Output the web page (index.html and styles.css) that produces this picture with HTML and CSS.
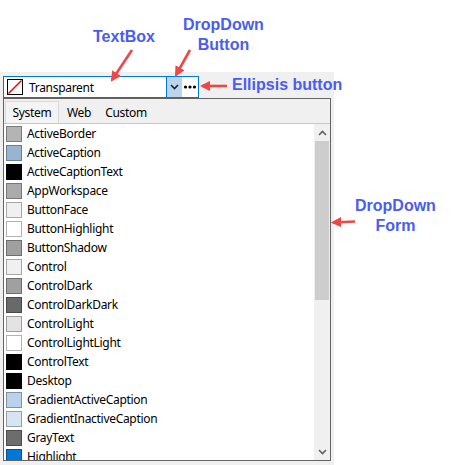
FILE: index.html
```html
<html lang="en">

<head>
  <meta charset="UTF-8">
  <meta name="viewport" content="width=device-width, initial-scale=1.0">
  <title>Color Picker</title>
  <link rel="stylesheet" href="styles.css">
</head>

<body>
  <div class="stage">
    <div class="panel">
      <div class="combo">
        <span class="swatch-none">
          <svg width="16" height="16" viewBox="0 0 16 16"><rect x="0.5" y="0.5" width="15" height="15" fill="#fff" stroke="#000"/><line x1="1.5" y1="14.5" x2="14.5" y2="1.5" stroke="#e00" stroke-width="1.5"/></svg>
        </span>
        <span class="combo-text">Transparent</span>
        <span class="drop-button">
          <svg width="9" height="6" viewBox="0 0 9 6"><path d="M1 1 L4.5 4.5 L8 1" fill="none" stroke="#222" stroke-width="1.6"/></svg>
        </span>
        <span class="ellipsis">
          <svg width="14" height="4" viewBox="0 0 14 4"><circle cx="2.5" cy="2" r="1.6" fill="#000"/><circle cx="7" cy="2" r="1.6" fill="#000"/><circle cx="11.5" cy="2" r="1.6" fill="#000"/></svg>
        </span>
      </div>

      <div class="dropdown">
        <div class="tabs">
          <span class="tab active">System</span>
          <span class="tab">Web</span>
          <span class="tab">Custom</span>
        </div>
        <div class="tab-page">
          <ul class="color-list">
            <li><span class="swatch" style="background:#b4b4b4"></span>ActiveBorder</li>
            <li><span class="swatch" style="background:#99b4d1"></span>ActiveCaption</li>
            <li><span class="swatch" style="background:#000000"></span>ActiveCaptionText</li>
            <li><span class="swatch" style="background:#ababab"></span>AppWorkspace</li>
            <li><span class="swatch" style="background:#f0f0f0"></span>ButtonFace</li>
            <li><span class="swatch" style="background:#ffffff"></span>ButtonHighlight</li>
            <li><span class="swatch" style="background:#a0a0a0"></span>ButtonShadow</li>
            <li><span class="swatch" style="background:#f0f0f0"></span>Control</li>
            <li><span class="swatch" style="background:#a0a0a0"></span>ControlDark</li>
            <li><span class="swatch" style="background:#696969"></span>ControlDarkDark</li>
            <li><span class="swatch" style="background:#e3e3e3"></span>ControlLight</li>
            <li><span class="swatch" style="background:#ffffff"></span>ControlLightLight</li>
            <li><span class="swatch" style="background:#000000"></span>ControlText</li>
            <li><span class="swatch" style="background:#000000"></span>Desktop</li>
            <li><span class="swatch" style="background:#b9d1ea"></span>GradientActiveCaption</li>
            <li><span class="swatch" style="background:#d7e4f2"></span>GradientInactiveCaption</li>
            <li><span class="swatch" style="background:#6d6d6d"></span>GrayText</li>
            <li class="last"><span class="swatch" style="background:#0078d7"></span>Highlight</li>
          </ul>
          <div class="scrollbar">
            <span class="scroll-arrow">
              <svg width="9" height="6" viewBox="0 0 9 6"><path d="M1 5 L4.5 1.5 L8 5" fill="none" stroke="#606060" stroke-width="1.6"/></svg>
            </span>
            <div class="scroll-track">
              <div class="scroll-thumb"></div>
            </div>
            <span class="scroll-arrow">
              <svg width="9" height="6" viewBox="0 0 9 6"><path d="M1 1 L4.5 4.5 L8 1" fill="none" stroke="#606060" stroke-width="1.6"/></svg>
            </span>
          </div>
        </div>
      </div>
    </div>

    <!-- callouts -->
    <div class="callout callout-textbox">TextBox</div>
    <div class="callout callout-button">DropDown<br>Button</div>
    <div class="callout callout-ellipsis">Ellipsis button</div>
    <div class="callout callout-form">DropDown<br>Form</div>

    <svg class="arrows" width="456" height="465" viewBox="0 0 456 465">
      <defs>
        <marker id="head" viewBox="0 0 10 10" refX="8" refY="5" markerWidth="4" markerHeight="4" orient="auto">
          <path d="M0 0 L10 5 L0 10 Z" fill="#f04646"/>
        </marker>
      </defs>
      <line x1="132" y1="50" x2="112" y2="80" stroke="#f04646" stroke-width="2.6" marker-end="url(#head)"/>
      <line x1="190" y1="50" x2="176" y2="75" stroke="#f04646" stroke-width="2.6" marker-end="url(#head)"/>
      <line x1="227" y1="86" x2="202" y2="86" stroke="#f04646" stroke-width="2.6" marker-end="url(#head)"/>
      <line x1="355" y1="221.5" x2="333" y2="222.5" stroke="#f04646" stroke-width="2.6" marker-end="url(#head)"/>
    </svg>
  </div>
</body>

</html>
```

FILE: styles.css
```css
body {
  margin: 0;
  background: #fff;
  font-family: "Noto Sans", "Open Sans", sans-serif;
  font-size: 12px;
  letter-spacing: -0.3px;
  color: #000;
}

.stage {
  position: relative;
  width: 456px;
  height: 465px;
  overflow: hidden;
}

.panel {
  margin-top: 72px;
  width: 334px;
  height: 393px;
  background: #f0f0f0;
  padding: 4px 0 0 3px;
  box-sizing: border-box;
}

.combo {
  display: flex;
  align-items: stretch;
  width: 196px;
  height: 22px;
  border: 1px solid #0078d7;
  box-sizing: border-box;
  background: #fff;
}

.swatch-none {
  display: flex;
  align-items: center;
  margin-left: 3px;
}

.combo-text {
  flex: 1;
  display: flex;
  align-items: center;
  padding-left: 6px;
}

.drop-button {
  width: 15px;
  display: flex;
  align-items: center;
  justify-content: center;
  background: #bcd5ee;
  border-left: 1px solid #0078d7;
}

.ellipsis {
  width: 16px;
  display: flex;
  align-items: center;
  justify-content: center;
}

.dropdown {
  width: 328px;
  height: 363px;
  border: 1px solid #646464;
  box-sizing: border-box;
  display: flex;
  flex-direction: column;
}

.tabs {
  display: flex;
  height: 24px;
  align-items: flex-end;
  padding-left: 1px;
}

.tab {
  height: 22px;
  display: flex;
  align-items: center;
  padding: 0 7px;
}

.tab.active {
  width: 54px;
  box-sizing: border-box;
  justify-content: center;
  border: 1px solid #d9d9d9;
  border-bottom: none;
  background: #f4f4f4;
  padding: 0;
  margin-right: 1px;
}

.tab-page {
  flex: 1;
  display: flex;
  border-top: 1px solid #c8c8c8;
  min-height: 0;
}

.color-list {
  flex: 1;
  list-style: none;
  margin: 0;
  padding: 0;
  background: #fff;
  overflow: hidden;
}

.color-list li {
  height: 19px;
  display: flex;
  align-items: center;
  padding-left: 2px;
}

.color-list li.last {
  align-items: flex-start;
  padding-top: 2px;
  box-sizing: border-box;
  line-height: 16px;
}

.swatch {
  width: 16px;
  height: 16px;
  box-sizing: border-box;
  border: 1px solid rgba(0, 0, 0, 0.3);
  margin-right: 5px;
}

.scrollbar {
  width: 16px;
  display: flex;
  flex-direction: column;
  background: #f0f0f0;
}

.scroll-arrow {
  height: 17px;
  display: flex;
  align-items: center;
  justify-content: center;
}

.scroll-track {
  flex: 1;
}

.scroll-thumb {
  height: 159px;
  margin: 0 1px;
  background: #cdcdcd;
}

.callout {
  position: absolute;
  font-family: "Liberation Sans", Arial, sans-serif;
  font-weight: bold;
  font-size: 16px;
  line-height: 20px;
  letter-spacing: 0;
  color: #4a5cf4;
  text-align: center;
}

.callout-textbox {
  left: 93px;
  top: 27px;
}

.callout-button {
  left: 183px;
  top: 15px;
}

.callout-ellipsis {
  left: 232px;
  top: 75px;
}

.callout-form {
  left: 355px;
  top: 196px;
}

.arrows {
  position: absolute;
  left: 0;
  top: 0;
  pointer-events: none;
}
```
